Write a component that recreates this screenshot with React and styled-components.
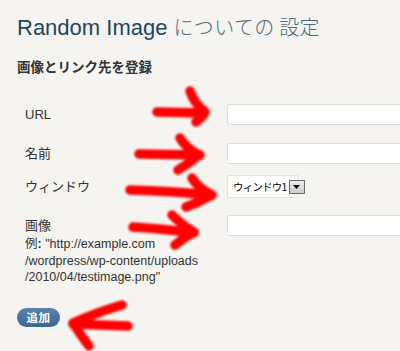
import React from "react";
import styled, { createGlobalStyle } from "styled-components";

const GlobalStyle = createGlobalStyle`
  html, body {
    margin: 0;
    padding: 0;
    background: #f5f4f0;
    overflow: hidden;
  }
  body {
    font-family: "Liberation Sans", Arial, "Noto Sans CJK JP", sans-serif;
    color: #333;
  }
`;

const jp = `"Liberation Sans", Arial, "Noto Sans CJK JP", sans-serif`;

export default function App() {
  return (
    <Page>
      <GlobalStyle />
      <Title>
        Random Image <TitleJp>についての 設定</TitleJp>
      </Title>
      <SubTitle>画像とリンク先を登録</SubTitle>

      <Form>
        <Row $top={26.5}>
          <Label>URL</Label>
          <TextInput />
        </Row>
        <Row $top={18}>
          <Label>名前</Label>
          <TextInput />
        </Row>
        <Row $top={12}>
          <Label>ウィンドウ</Label>
          <FakeSelect>
            <SelectText>ウィンドウ1</SelectText>
            <DropButton>
              <svg width="7" height="4" viewBox="0 0 7 4">
                <path d="M0 0 H7 L3.5 4 Z" fill="#000" />
              </svg>
            </DropButton>
          </FakeSelect>
        </Row>
        <Row $top={17}>
          <Label>
            画像
            <Example>
              例<b>:</b> "http://example.com
              <br />
              /wordpress/wp-content/uploads
              <br />
              /2010/04/testimage.png"
            </Example>
          </Label>
          <TextInput />
        </Row>
      </Form>

      <AddButton>追加</AddButton>

      <Marks width="400" height="351" viewBox="0 0 400 351">
        <defs>
          <filter id="soft" x="-10%" y="-10%" width="120%" height="120%">
            <feGaussianBlur stdDeviation="1.1" />
          </filter>
        </defs>
        <g
          filter="url(#soft)"
          stroke="#ff0000"
          strokeWidth="9.5"
          strokeLinecap="round"
          strokeLinejoin="round"
          fill="none"
        >
          <path d="M157 112 L204 113" />
          <path d="M190 91 Q194 103 205 112 Q202 118 196 122" />

          <path d="M139 154 L200 155" />
          <path d="M180 138 Q186 148 199 155 Q190 163 178 170" />

          <path d="M130 190 Q170 191 212 195" />
          <path d="M192 178 Q198 188 212 195 Q200 202 186 207" />

          <path d="M133 227 Q165 229 194 233" />
          <path d="M172 215 Q182 225 194 232 Q183 238 175 245" />

          <path d="M128 326 Q100 325 73 324" />
          <path d="M122 305 Q95 313 73 323 Q80 334 89 346" />
        </g>
      </Marks>
    </Page>
  );
}

const Page = styled.div`
  position: relative;
  width: 400px;
  height: 351px;
  padding-left: 17px;
  box-sizing: border-box;
  overflow: hidden;
`;

const Title = styled.h2`
  margin: 13px 0 0;
  font-size: 22px;
  line-height: 28px;
  font-weight: normal;
  color: #1d4660;
  white-space: nowrap;
`;

const TitleJp = styled.span`
  font-family: "Noto Sans CJK JP", sans-serif;
  font-weight: 300;
  font-size: 20px;
  color: #4f6c7a;
  letter-spacing: 0.3px;
`;

const SubTitle = styled.h3`
  margin: 15.5px 0 0;
  font-family: ${jp};
  font-size: 13.5px;
  line-height: 20px;
  font-weight: bold;
  color: #333;
`;

const Form = styled.div`
  display: flex;
  flex-direction: column;
`;

const Row = styled.div`
  display: grid;
  grid-template-columns: 210px 1fr;
  align-items: start;
  margin-top: ${(p) => p.$top}px;
`;

const Label = styled.div`
  padding-left: 8px;
  font-family: ${jp};
  font-size: 13px;
  line-height: 21px;
  color: #333;
`;

const Example = styled.div`
  font-family: "Liberation Sans", Arial, "Noto Sans CJK JP", sans-serif;
  font-size: 12.5px;
  line-height: 16.5px;
  color: #333;
  white-space: nowrap;
`;

const TextInput = styled.input`
  width: 260px;
  height: 21px;
  box-sizing: border-box;
  border: 1px solid #dcdcd8;
  border-radius: 3px;
  background: #fff;
  padding: 0 4px;
  outline: none;
`;

const FakeSelect = styled.div`
  display: flex;
  align-items: center;
  width: 71px;
  height: 23px;
  box-sizing: border-box;
  margin-top: -1px;
  border: 1px solid #e2e2de;
  background: #fff;
  padding-left: 5px;
`;

const SelectText = styled.span`
  font-family: "Noto Sans CJK JP", sans-serif;
  font-size: 10.5px;
  letter-spacing: -0.8px;
  color: #000;
  white-space: nowrap;
`;

const DropButton = styled.span`
  display: flex;
  align-items: center;
  justify-content: center;
  flex: none;
  width: 16px;
  height: 14px;
  margin-left: 2px;
  box-sizing: border-box;
  border: 1px solid #6b6b6b;
  background: linear-gradient(#ececec, #cdcdcd);
`;

const AddButton = styled.button`
  display: block;
  margin-top: 22px;
  width: 43px;
  height: 19px;
  padding: 0;
  border: none;
  border-radius: 10px;
  background: linear-gradient(#5684ad, #3a6894);
  color: #fff;
  font-family: "Noto Sans CJK JP", sans-serif;
  font-weight: bold;
  font-size: 11.5px;
  line-height: 19px;
  letter-spacing: 0.5px;
`;

const Marks = styled.svg`
  position: absolute;
  left: 0;
  top: 0;
  pointer-events: none;
`;
